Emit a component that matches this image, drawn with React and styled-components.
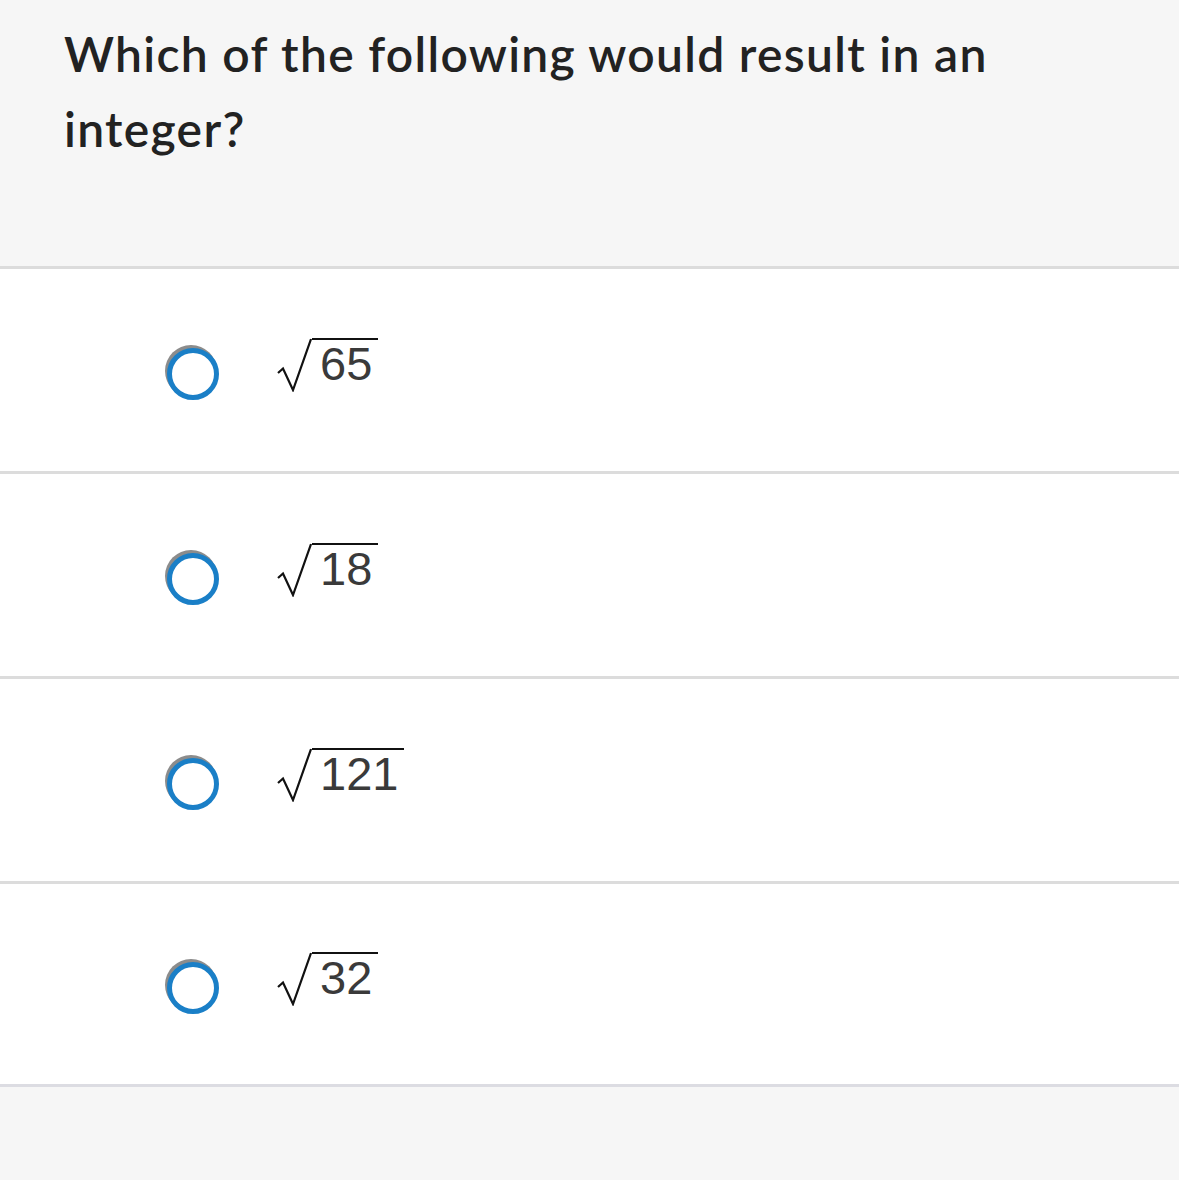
import React from "react";
import styled, { createGlobalStyle } from "styled-components";

const Global = createGlobalStyle`
  html, body { margin: 0; padding: 0; background: #f6f6f6; }
  body { font-family: "Lato", "Liberation Sans", sans-serif; }
`;

const Page = styled.div`
  width: 1179px;
  min-height: 1180px;
  background: #f6f6f6;
  display: flex;
  flex-direction: column;
`;

const Header = styled.header`
  height: 269px;
  box-sizing: border-box;
  padding: 16px 120px 0 64px;
  border-bottom: 3px solid #dcdcdc;
`;

const Title = styled.h1`
  margin: 0;
  font-family: "Lato", "Liberation Sans", sans-serif;
  font-weight: 600;
  font-size: 48px;
  line-height: 75px;
  color: #222222;
  letter-spacing: 1.3px;
`;

const Options = styled.div`
  display: flex;
  flex-direction: column;
  background: #ffffff;
`;

const Row = styled.label`
  height: ${(p) => (p.$last ? "200px" : "202px")};
  display: flex;
  align-items: center;
  padding-left: 167px;
  border-bottom: 3px solid ${(p) => (p.$last ? "#dcdce2" : "#dcdcdc")};
  background: #fff;
  cursor: pointer;
`;

const Radio = styled.span`
  width: 52px;
  height: 52px;
  box-sizing: border-box;
  border-radius: 50%;
  border: 5px solid #1a7fc7;
  background: #fff;
  box-shadow: -2px -3px 0 0 #8c8c8c;
  flex: none;
  margin-top: 8px;
`;

const Sqrt = styled.span`
  display: inline-flex;
  align-items: flex-start;
  margin-left: 57px;
  margin-bottom: 10px;
`;

const Radical = styled.svg`
  width: 36px;
  height: 54px;
  flex: none;
  display: block;
`;

const Radicand = styled.span`
  border-top: 2px solid #111;
  padding: 0 6px 0 8px;
  font-family: "Liberation Sans", Arial, sans-serif;
  font-size: 47px;
  line-height: 48px;
  color: #3a3a3a;
`;

const options = ["65", "18", "121", "32"];

export default function App() {
  return (
    <Page>
      <Global />
      <Header>
        <Title>Which of the following would result in an integer?</Title>
      </Header>
      <Options>
        {options.map((o, i) => (
          <Row key={o} $last={i === options.length - 1}>
            <Radio />
            <Sqrt>
              <Radical viewBox="0 0 36 54">
                <path
                  d="M2 35 L7 30.5 L17 52 L35 1"
                  fill="none"
                  stroke="#111"
                  strokeWidth="2.2"
                  strokeLinejoin="miter"
                />
              </Radical>
              <Radicand>{o}</Radicand>
            </Sqrt>
          </Row>
        ))}
      </Options>
    </Page>
  );
}
